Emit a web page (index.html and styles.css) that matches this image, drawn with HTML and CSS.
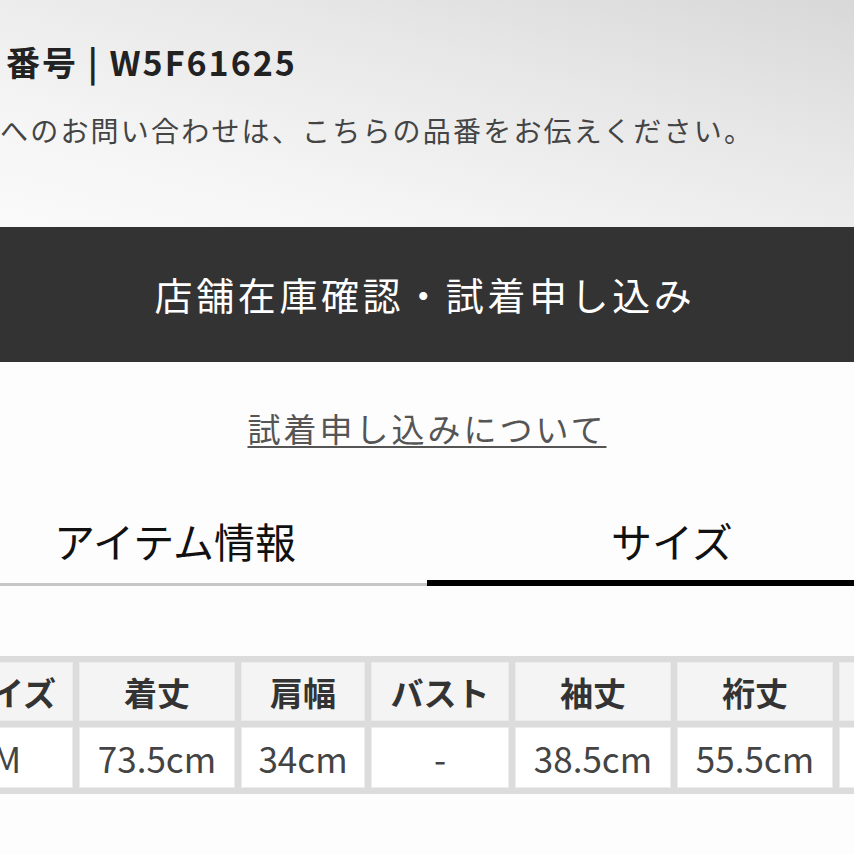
FILE: index.html
```html
<!DOCTYPE html>
<html lang="ja">
<head>
<meta charset="utf-8">
<title>商品情報</title>
<link rel="stylesheet" href="styles.css">
</head>
<body>
<div class="page">
  <section class="intro">
    <div class="code">番号 | W5F61625</div>
    <p class="note">へのお問い合わせは、こちらの品番をお伝えください。</p>
  </section>
  <div class="cta">店舗在庫確認・試着申し込み</div>
  <div class="link-wrap"><a class="link" href="#">試着申し込みについて</a></div>
  <nav class="tabs">
    <div class="tab tab-info">アイテム情報</div>
    <div class="tab tab-size">サイズ</div>
  </nav>
  <div class="size-table">
    <div class="cell head">サイズ</div>
    <div class="cell head">着丈</div>
    <div class="cell head">肩幅</div>
    <div class="cell head">バスト</div>
    <div class="cell head">袖丈</div>
    <div class="cell head">裄丈</div>
    <div class="cell head">裾幅</div>
    <div class="cell">M</div>
    <div class="cell">73.5cm</div>
    <div class="cell">34cm</div>
    <div class="cell">-</div>
    <div class="cell">38.5cm</div>
    <div class="cell">55.5cm</div>
    <div class="cell">-</div>
  </div>
</div>
</body>
</html>
```
FILE: styles.css
```css
html, body {
  margin: 0;
  padding: 0;
}
body {
  width: 854px;
  height: 854px;
  overflow: hidden;
  background: #fdfdfd;
  font-family: "Noto Sans CJK JP", "Noto Sans", sans-serif;
  color: #333;
}
.page {
  display: flex;
  flex-direction: column;
}
.intro {
  height: 227px;
  box-sizing: border-box;
  padding-top: 42px;
  background: linear-gradient(195deg, #d8d8d8 0%, #e7e7e7 35%, #f5f5f5 75%, #fafafa 100%);
}
.code {
  margin-left: 6px;
  font-size: 34px;
  line-height: 40px;
  font-weight: 700;
  letter-spacing: 2px;
  color: #222;
}
.note {
  margin: 30px 0 0 0;
  font-size: 28px;
  line-height: 36px;
  letter-spacing: 2.2px;
  color: #444;
  white-space: nowrap;
}
.cta {
  height: 135px;
  background: #333333;
  color: #fff;
  display: flex;
  align-items: center;
  justify-content: center;
  font-size: 38px;
  letter-spacing: 3.6px;
  padding-right: 4px;
  padding-bottom: 2px;
  box-sizing: border-box;
}
.link-wrap {
  margin-top: 46px;
  text-align: center;
  line-height: 40px;
}
.link {
  font-size: 33px;
  letter-spacing: 3px;
  color: #555;
  text-decoration: underline;
  text-decoration-thickness: 2px;
  text-underline-offset: 4px;
}
.tabs {
  display: flex;
  margin-top: 63px;
}
.tab {
  width: 427px;
  box-sizing: border-box;
  font-size: 41px;
  line-height: 44px;
  color: #111;
}
.tab-info {
  padding-left: 54px;
  padding-bottom: 21px;
  border-bottom: 3px solid #c6c6c6;
}
.tab-size {
  padding-left: 184px;
  padding-bottom: 18px;
  border-bottom: 6px solid #000;
}
.size-table {
  display: grid;
  grid-template-columns: 132px 156px 124px 138px 156px 156px 140px;
  grid-auto-rows: 59px 61px;
  gap: 6px;
  padding: 6px;
  width: max-content;
  margin-top: 70px;
  margin-left: -65px;
  background: #dcdcdc;
}
.cell {
  background: #fff;
  box-shadow: inset 0 0 0 1px #ececec;
  display: flex;
  align-items: center;
  justify-content: center;
  font-size: 35px;
  color: #444;
}
.cell.head {
  background: #f4f4f4;
  font-weight: 700;
  font-size: 33px;
  color: #333;
}
```
